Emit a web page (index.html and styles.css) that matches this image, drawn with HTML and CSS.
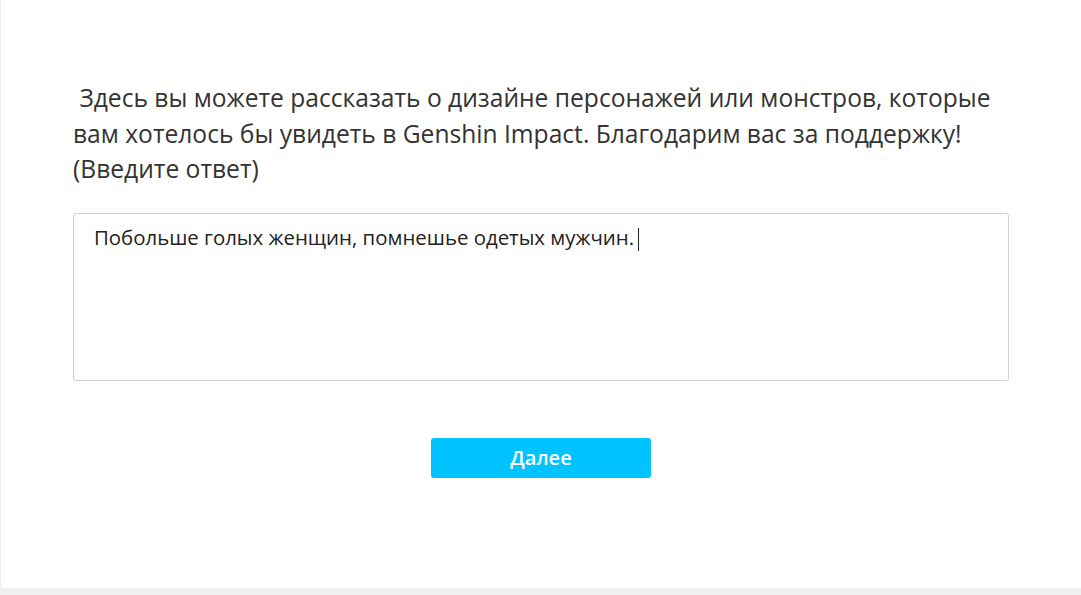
FILE: index.html
```html
<!DOCTYPE html>
<html lang="ru">
<head>
<meta charset="utf-8">
<link rel="stylesheet" href="styles.css">
</head>
<body>
<main class="card">
  <div class="question">
    <p class="title">&nbsp;Здесь вы можете рассказать о дизайне персонажей или монстров, которые вам хотелось бы увидеть в Genshin Impact. Благодарим вас за поддержку!<br>(Введите ответ)</p>
    <div class="answer"><span class="answer-text">Побольше голых женщин, помнешье одетых мужчин.</span><span class="caret"></span></div>
  </div>
  <div class="actions">
    <button class="next">Далее</button>
  </div>
</main>
</body>
</html>
```
FILE: styles.css
```css
html, body {
  margin: 0;
  padding: 0;
  height: 100%;
}
body {
  background: #f0f0f0;
  font-family: "Open Sans", "Noto Sans", sans-serif;
  color: #333;
}
.card {
  background: #fff;
  margin-left: 1px;
  height: 588px;
  box-sizing: border-box;
  padding: 80px 72px 0 72px;
}
.title {
  margin: 0;
  font-size: 24.6px;
  line-height: 35.5px;
  color: #333;
}
.answer {
  margin-top: 26px;
  height: 168px;
  box-sizing: border-box;
  border: 1px solid #d0d0d0;
  border-radius: 3px;
  padding: 9px 20px;
  font-size: 20.4px;
  line-height: 28px;
  color: #222;
  display: flex;
  align-items: flex-start;
}
.caret {
  display: inline-block;
  width: 1px;
  height: 23px;
  background: #222;
  margin-left: 4px;
  margin-top: 5px;
}
.actions {
  display: flex;
  justify-content: center;
  margin-top: 57px;
}
.next {
  width: 220px;
  height: 40px;
  background: #00c3ff;
  border: none;
  border-radius: 3px;
  color: #fff;
  font-family: "Open Sans", "Noto Sans", sans-serif;
  font-size: 20px;
  font-weight: 600;
  padding: 0;
}
```
